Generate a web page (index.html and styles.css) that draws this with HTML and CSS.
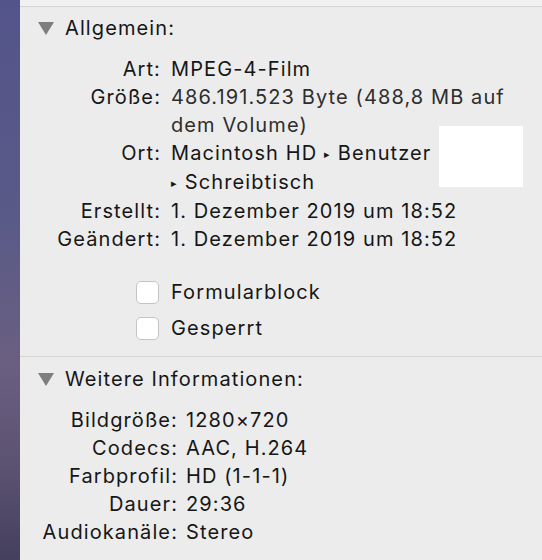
FILE: index.html
```html
<!DOCTYPE html>
<html lang="de">
<head>
    <meta charset="UTF-8">
    <title>Informationen</title>
    <link rel="stylesheet" href="styles.css">
</head>
<body>
    <div class="desktop"></div>
    <div class="panel">
        <div class="topbar"></div>

        <div class="section">
            <div class="section-head">
                <span class="disclosure"></span>
                <span>Allgemein:</span>
            </div>
            <div class="info info-general">
                <div class="label">Art:</div>
                <div class="value">MPEG-4-Film</div>
                <div class="label">Größe:</div>
                <div class="value muted">486.191.523 Byte (488,8 MB auf<br>dem Volume)</div>
                <div class="label">Ort:</div>
                <div class="value">Macintosh HD <span class="arrow">▸</span> Benutzer<br><span class="arrow">▸</span> Schreibtisch</div>
                <div class="label">Erstellt:</div>
                <div class="value">1. Dezember 2019 um 18:52</div>
                <div class="label">Geändert:</div>
                <div class="value">1. Dezember 2019 um 18:52</div>
            </div>
            <div class="checks">
                <label class="check"><span class="box"></span>Formularblock</label>
                <label class="check"><span class="box"></span>Gesperrt</label>
            </div>
            <div class="redact"></div>
        </div>

        <div class="section second">
            <div class="section-head">
                <span class="disclosure"></span>
                <span>Weitere Informationen:</span>
            </div>
            <div class="info info-more">
                <div class="label">Bildgröße:</div>
                <div class="value">1280×720</div>
                <div class="label">Codecs:</div>
                <div class="value">AAC, H.264</div>
                <div class="label">Farbprofil:</div>
                <div class="value">HD (1-1-1)</div>
                <div class="label">Dauer:</div>
                <div class="value">29:36</div>
                <div class="label">Audiokanäle:</div>
                <div class="value">Stereo</div>
            </div>
        </div>
    </div>
</body>
</html>
```

FILE: styles.css
```css
* {
    margin: 0;
    padding: 0;
    box-sizing: border-box;
}
html, body {
    height: 100%;
}
body {
    display: flex;
    overflow: hidden;
    font-family: Inter, "Noto Sans", sans-serif;
    font-size: 20px;
    letter-spacing: 1.1px;
    color: #161616;
}
.desktop {
    width: 20px;
    flex-shrink: 0;
    background: linear-gradient(to bottom, #53548a 0%, #5a5a88 40%, #6a5f80 65%, #5a5070 85%, #44405d 100%);
}
.panel {
    flex: 1;
    background: #ececec;
}
.topbar {
    height: 7px;
    background: #f1f1f1;
    border-bottom: 1px solid #d6d6d6;
}
.section {
    position: relative;
    padding-top: 7px;
}
.section.second {
    margin-top: 10px;
    padding-top: 8px;
    border-top: 1px solid #d4d4d4;
}
.section-head {
    display: flex;
    align-items: center;
    gap: 11px;
    height: 28px;
    padding-left: 18px;
}
.disclosure {
    width: 0;
    height: 0;
    border-left: 8px solid transparent;
    border-right: 8px solid transparent;
    border-top: 13px solid #7e7e7e;
}
.info {
    display: grid;
    line-height: 28px;
}
.info-general {
    grid-template-columns: 141px 1fr;
    column-gap: 10px;
    margin-top: 13px;
}
.info-more {
    grid-template-columns: 158px 1fr;
    column-gap: 8px;
    margin-top: 13px;
}
.label {
    text-align: right;
    white-space: nowrap;
}
.value {
    white-space: nowrap;
}
.muted {
    color: #2e2e2e;
}
.arrow {
    font-size: 11px;
    vertical-align: 2px;
}
.checks {
    margin-top: 21px;
    padding-left: 116px;
}
.check {
    display: flex;
    align-items: center;
    gap: 12px;
    height: 36px;
}
.box {
    width: 23px;
    height: 23px;
    background: #fff;
    border: 1px solid #c4c4c4;
    border-radius: 5px;
}
.redact {
    position: absolute;
    left: 419px;
    top: 119px;
    width: 84px;
    height: 61px;
    background: #fff;
}
```
